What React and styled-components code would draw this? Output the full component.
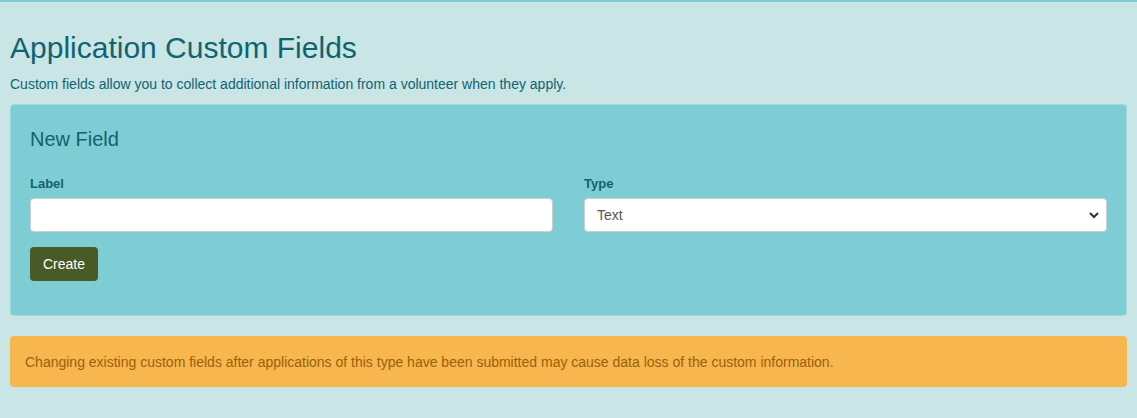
import React from "react";
import styled, { createGlobalStyle } from "styled-components";

const GlobalStyle = createGlobalStyle`
  html, body {
    margin: 0;
    padding: 0;
    background: #cae5e6;
  }
  body {
    font-family: "Liberation Sans", Arial, sans-serif;
    color: #0f6470;
  }
  * { box-sizing: border-box; }
`;

const Page = styled.div`
  min-height: 418px;
  border-top: 2px solid #7ecdd4;
  padding: 28px 10px 20px 10px;
`;

const Title = styled.h1`
  margin: 0;
  font-size: 30px;
  font-weight: 400;
  line-height: 36px;
  color: #0f6470;
`;

const Lead = styled.p`
  margin: 8px 0 10px 0;
  font-size: 14px;
  line-height: 20px;
  color: #0f6470;
`;

const Panel = styled.section`
  background: #7ecdd4;
  border: 1px solid #9fd8dd;
  border-radius: 4px;
  padding: 20px 19px 34px 19px;
`;

const PanelTitle = styled.h2`
  margin: 0 0 22px 0;
  font-size: 20px;
  font-weight: 400;
  line-height: 28px;
  color: #0f6470;
`;

const Row = styled.div`
  display: grid;
  grid-template-columns: 1fr 1fr;
  column-gap: 31px;
`;

const Field = styled.div`
  display: flex;
  flex-direction: column;
`;

const Label = styled.label`
  font-size: 13px;
  font-weight: 700;
  line-height: 18px;
  margin-bottom: 5px;
  color: #0f6470;
`;

const TextInput = styled.input`
  height: 34px;
  border: 1px solid #c6d2d4;
  border-radius: 4px;
  background: #fff;
  padding: 6px 12px;
  font-family: inherit;
  font-size: 14px;
  outline: none;
`;

const SelectWrap = styled.div`
  position: relative;
`;

const Select = styled.select`
  width: 100%;
  height: 34px;
  border: 1px solid #c6d2d4;
  border-radius: 4px;
  background: #fff;
  padding: 6px 12px;
  font-family: inherit;
  font-size: 14px;
  color: #555;
  appearance: none;
  outline: none;
`;

const Chevron = styled.svg`
  position: absolute;
  right: 8px;
  top: 13px;
  pointer-events: none;
`;

const Button = styled.button`
  margin-top: 15px;
  height: 34px;
  padding: 6px 13px;
  border: none;
  border-radius: 4px;
  background: #4a5a26;
  color: #fff;
  font-family: inherit;
  font-size: 14px;
  cursor: pointer;
`;

const Alert = styled.div`
  margin-top: 20px;
  background: #f7b64e;
  border-radius: 4px;
  padding: 16px 15px 15px 15px;
  font-size: 14px;
  line-height: 20px;
  color: #9a610b;
`;

export default function App() {
  return (
    <>
      <GlobalStyle />
      <Page>
        <Title>Application Custom Fields</Title>
        <Lead>
          Custom fields allow you to collect additional information from a
          volunteer when they apply.
        </Lead>
        <Panel>
          <PanelTitle>New Field</PanelTitle>
          <Row>
            <Field>
              <Label htmlFor="label">Label</Label>
              <TextInput id="label" type="text" />
            </Field>
            <Field>
              <Label htmlFor="type">Type</Label>
              <SelectWrap>
                <Select id="type" defaultValue="text">
                  <option value="text">Text</option>
                  <option value="textarea">Text Area</option>
                  <option value="checkbox">Checkbox</option>
                </Select>
                <Chevron width="10" height="8" viewBox="0 0 10 8">
                  <path
                    d="M1 2 L5 6 L9 2"
                    fill="none"
                    stroke="#333"
                    strokeWidth="2"
                  />
                </Chevron>
              </SelectWrap>
            </Field>
          </Row>
          <Button>Create</Button>
        </Panel>
        <Alert>
          Changing existing custom fields after applications of this type have
          been submitted may cause data loss of the custom information.
        </Alert>
      </Page>
    </>
  );
}
